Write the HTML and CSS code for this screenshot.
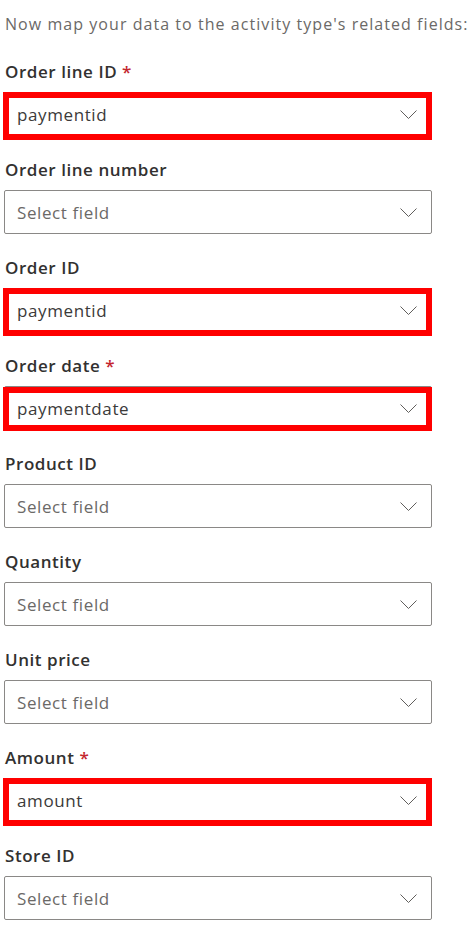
FILE: index.html
```html
<!DOCTYPE html>
<html lang="en">
<head>
<meta charset="utf-8">
<link rel="stylesheet" href="styles.css">
</head>
<body>
<div class="panel">
  <p class="intro">Now map your data to the activity type's related fields:</p>
  <div class="fields">
    <div class="field">
      <div class="label">Order line ID <span class="req">*</span></div>
      <div class="select marked"><span class="value">paymentid</span><svg class="chev" width="17" height="9" viewBox="0 0 17 9"><polyline points="0.5,0.5 8.5,8.5 16.5,0.5" fill="none" stroke="#605e5c" stroke-width="1"/></svg></div>
    </div>
    <div class="field">
      <div class="label">Order line number</div>
      <div class="select"><span class="placeholder">Select field</span><svg class="chev" width="17" height="9" viewBox="0 0 17 9"><polyline points="0.5,0.5 8.5,8.5 16.5,0.5" fill="none" stroke="#605e5c" stroke-width="1"/></svg></div>
    </div>
    <div class="field">
      <div class="label">Order ID</div>
      <div class="select marked"><span class="value">paymentid</span><svg class="chev" width="17" height="9" viewBox="0 0 17 9"><polyline points="0.5,0.5 8.5,8.5 16.5,0.5" fill="none" stroke="#605e5c" stroke-width="1"/></svg></div>
    </div>
    <div class="field">
      <div class="label">Order date <span class="req">*</span></div>
      <div class="select marked tight"><span class="value">paymentdate</span><svg class="chev" width="17" height="9" viewBox="0 0 17 9"><polyline points="0.5,0.5 8.5,8.5 16.5,0.5" fill="none" stroke="#605e5c" stroke-width="1"/></svg></div>
    </div>
    <div class="field">
      <div class="label">Product ID</div>
      <div class="select"><span class="placeholder">Select field</span><svg class="chev" width="17" height="9" viewBox="0 0 17 9"><polyline points="0.5,0.5 8.5,8.5 16.5,0.5" fill="none" stroke="#605e5c" stroke-width="1"/></svg></div>
    </div>
    <div class="field">
      <div class="label">Quantity</div>
      <div class="select"><span class="placeholder">Select field</span><svg class="chev" width="17" height="9" viewBox="0 0 17 9"><polyline points="0.5,0.5 8.5,8.5 16.5,0.5" fill="none" stroke="#605e5c" stroke-width="1"/></svg></div>
    </div>
    <div class="field">
      <div class="label">Unit price</div>
      <div class="select"><span class="placeholder">Select field</span><svg class="chev" width="17" height="9" viewBox="0 0 17 9"><polyline points="0.5,0.5 8.5,8.5 16.5,0.5" fill="none" stroke="#605e5c" stroke-width="1"/></svg></div>
    </div>
    <div class="field">
      <div class="label">Amount <span class="req">*</span></div>
      <div class="select marked"><span class="value">amount</span><svg class="chev" width="17" height="9" viewBox="0 0 17 9"><polyline points="0.5,0.5 8.5,8.5 16.5,0.5" fill="none" stroke="#605e5c" stroke-width="1"/></svg></div>
    </div>
    <div class="field">
      <div class="label">Store ID</div>
      <div class="select"><span class="placeholder">Select field</span><svg class="chev" width="17" height="9" viewBox="0 0 17 9"><polyline points="0.5,0.5 8.5,8.5 16.5,0.5" fill="none" stroke="#605e5c" stroke-width="1"/></svg></div>
    </div>
  </div>
</div>
</body>
</html>
```
FILE: styles.css
```css
html, body {
  margin: 0;
  padding: 0;
  background: #ffffff;
}
body {
  font-family: "Open Sans", "Noto Sans", "Liberation Sans", sans-serif;
  color: #323130;
}
.panel {
  padding: 12px 0 0 4px;
  width: 428px;
}
.intro {
  margin: 0;
  padding-left: 1px;
  font-size: 16px;
  line-height: 24px;
  color: #6b6967;
  white-space: nowrap;
  letter-spacing: 1.05px;
}
.fields {
  display: flex;
  flex-direction: column;
  gap: 22px;
  margin-top: 24px;
}
.field {
  display: flex;
  flex-direction: column;
  gap: 8px;
}
.label {
  padding-left: 1px;
  font-size: 17px;
  font-weight: 600;
  line-height: 24px;
  letter-spacing: 0.55px;
  color: #323130;
}
.req {
  color: #c4262e;
}
.select {
  position: relative;
  box-sizing: border-box;
  height: 44px;
  border: 1px solid #8a8886;
  border-radius: 2px;
  display: flex;
  align-items: center;
  justify-content: space-between;
  padding: 0 14px 0 12px;
  font-size: 17px;
  letter-spacing: 0.6px;
}
.value {
  color: #3b3a39;
}
.placeholder {
  color: #6b6967;
}
.chev {
  display: block;
}
.marked::after {
  content: "";
  position: absolute;
  top: -1px;
  left: -2px;
  right: -1px;
  bottom: -5px;
  border: 6px solid #ff0000;
  pointer-events: none;
}
.marked.tight::after {
  top: 0;
  bottom: -2px;
}
```
